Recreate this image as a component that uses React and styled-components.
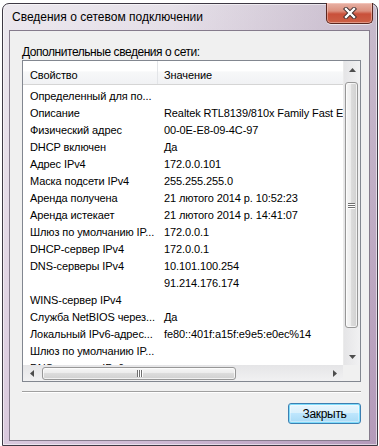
import React from 'react';
import styled, { createGlobalStyle } from 'styled-components';

const GlobalStyle = createGlobalStyle`
  html, body {
    margin: 0;
    padding: 0;
    background: #ffffff;
  }
  body {
    font-family: "Liberation Sans", Arial, sans-serif;
    color: #000;
  }
  #root {
    padding: 3px 0 0 2px;
  }
`;

const Window = styled.div`
  box-sizing: border-box;
  width: 376px;
  height: 443px;
  display: flex;
  flex-direction: column;
  padding: 0 7px 4px 6px;
  border: 1px solid #3e3944;
  border-radius: 7px 7px 0 0;
  background:
    linear-gradient(to right, rgba(255, 255, 255, 0.25), rgba(255, 255, 255, 0) 45%, rgba(90, 50, 100, 0.22)),
    linear-gradient(to bottom, #e6e1e9 0%, #ddd1e0 40%, #cdb7d2 100%);
  box-shadow: inset 0 0 0 1px rgba(255, 255, 255, 0.55);
`;

const TitleBar = styled.div`
  height: 26px;
  margin: 0 -7px 0 -6px;
  padding: 0 4px 0 9px;
  display: flex;
  justify-content: space-between;
  align-items: flex-start;
`;

const Title = styled.div`
  padding-top: 6px;
  font-size: 12px;
  line-height: 15px;
  color: #000;
`;

const CloseButton = styled.div`
  box-sizing: border-box;
  width: 47px;
  height: 21px;
  margin-top: -1px;
  display: flex;
  align-items: center;
  justify-content: center;
  border: 1px solid #5b2720;
  border-top: none;
  border-radius: 0 0 5px 5px;
  background: linear-gradient(to bottom, #e8b2a6 0%, #dc907e 40%, #c9503a 55%, #cc6046 100%);
  box-shadow: inset 0 0 0 1px rgba(255, 220, 210, 0.45), 0 1px 0 rgba(255, 255, 255, 0.6);
`;

const Client = styled.div`
  flex: 1;
  display: flex;
  flex-direction: column;
  padding: 14px 8px 0 12px;
  border: 1px solid #857b8c;
  background: #f0f0f0;
`;

const Caption = styled.div`
  font-size: 12px;
  line-height: 15px;
  letter-spacing: -0.45px;
`;

const ListBox = styled.div`
  height: 322px;
  box-sizing: border-box;
  border: 1px solid #828790;
  background: #ffffff;
  display: grid;
  grid-template-columns: minmax(0, 1fr) 17px;
  grid-template-rows: minmax(0, 1fr) 16px;
`;

const Viewport = styled.div`
  overflow: hidden;
  font-size: 11px;
  letter-spacing: -0.1px;
`;

const Header = styled.div`
  display: grid;
  grid-template-columns: 134px minmax(0, 1fr);
  height: 23px;
  border-bottom: 1px solid #d5d5d5;
  background: linear-gradient(to bottom, #ffffff 0%, #ffffff 45%, #f7f8f9 46%, #f1f2f4 100%);
`;

const HeaderCell = styled.div`
  padding: 7px 0 0 ${(p) => (p.$divided ? 6 : 7)}px;
  line-height: 15px;
  white-space: nowrap;
  border-left: ${(p) => (p.$divided ? '1px solid #e3e5e8' : 'none')};
`;

const Rows = styled.div`
  padding-top: 3px;
`;

const Row = styled.div`
  display: grid;
  grid-template-columns: 134px minmax(0, 1fr);
  height: 17px;
  line-height: 17px;
  white-space: nowrap;
`;

const Cell = styled.div`
  padding-left: 7px;
  overflow: ${(p) => (p.$clip ? 'hidden' : 'visible')};
`;

const VScroll = styled.div`
  grid-row: 1;
  grid-column: 2;
  display: flex;
  flex-direction: column;
  background: linear-gradient(to right, #e5e5e7, #f1f1f2);
  border-left: 1px solid #ebebeb;
`;

const HScroll = styled.div`
  grid-row: 2;
  grid-column: 1;
  display: flex;
  background: linear-gradient(to bottom, #e5e5e7, #f1f1f2);
`;

const Corner = styled.div`
  grid-row: 2;
  grid-column: 2;
  background: #f0f0f0;
`;

const ArrowBtn = styled.div`
  flex: none;
  width: ${(p) => (p.$horizontal ? '17px' : 'auto')};
  height: ${(p) => (p.$horizontal ? 'auto' : '17px')};
  display: flex;
  align-items: center;
  justify-content: center;
`;

const Track = styled.div`
  flex: 1;
  display: flex;
  flex-direction: ${(p) => (p.$horizontal ? 'row' : 'column')};
  padding: ${(p) => (p.$horizontal ? '2px 0 1px 2px' : '4px 2px 0 1px')};
`;

const Thumb = styled.div`
  box-sizing: border-box;
  flex: none;
  display: flex;
  align-items: center;
  justify-content: center;
  width: ${(p) => (p.$horizontal ? `${p.$length}px` : 'auto')};
  height: ${(p) => (p.$horizontal ? 'auto' : `${p.$length}px`)};
  border: 1px solid #979797;
  border-radius: 3px;
  background: linear-gradient(
    ${(p) => (p.$horizontal ? 'to bottom' : 'to right')},
    #f6f6f6 0%,
    #ececec 45%,
    #dcdcdc 50%,
    #d0d0d0 100%
  );
  box-shadow: inset 0 0 0 1px rgba(255, 255, 255, 0.7);
`;

const Separator = styled.div`
  margin-top: 9px;
  border-top: 1px solid #a0a0a0;
  border-bottom: 1px solid #ffffff;
`;

const Footer = styled.div`
  margin-top: 10px;
  display: flex;
  justify-content: flex-end;
`;

const Button = styled.button`
  box-sizing: border-box;
  width: 73px;
  height: 21px;
  padding: 0;
  font-family: "Liberation Sans", Arial, sans-serif;
  font-size: 12px;
  letter-spacing: -0.3px;
  color: #000;
  border: 1px solid #3c7fb1;
  border-radius: 3px;
  background: linear-gradient(to bottom, #eaf6fd 0%, #d9f0fc 48%, #bee6fd 50%, #a7d9f5 100%);
  box-shadow: inset 0 0 0 1px #7fdcfb, inset 0 0 0 2px rgba(255, 255, 255, 0.35);
`;

const Arrow = ({ dir }) => {
  const pts = {
    up: '0,4 3.5,0 7,4',
    down: '0,0 3.5,4 7,0',
    left: '4,0 0,3.5 4,7',
    right: '0,0 4,3.5 0,7',
  }[dir];
  const vertical = dir === 'up' || dir === 'down';
  return (
    <svg width={vertical ? 7 : 4} height={vertical ? 4 : 7} viewBox={vertical ? '0 0 7 4' : '0 0 4 7'}>
      <polygon points={pts} fill="#4d4d4d" />
    </svg>
  );
};

const Grip = ({ horizontal }) => (
  <svg width="7" height="7" viewBox="0 0 7 7">
    {[0, 2, 4].map((o) =>
      horizontal ? (
        <g key={o}>
          <rect x={o + 1} y="0" width="1" height="7" fill="#6f6f6f" />
          <rect x={o + 2} y="0" width="1" height="7" fill="#ffffff" />
        </g>
      ) : (
        <g key={o}>
          <rect x="0" y={o + 1} width="7" height="1" fill="#6f6f6f" />
          <rect x="0" y={o + 2} width="7" height="1" fill="#ffffff" />
        </g>
      )
    )}
  </svg>
);

const CloseGlyph = () => (
  <svg width="14" height="12" viewBox="0 0 14 12">
    <path d="M3 2 L11 10 M11 2 L3 10" stroke="#3a2a2a" strokeWidth="4.2" strokeLinecap="square" />
    <path d="M3 2 L11 10 M11 2 L3 10" stroke="#ffffff" strokeWidth="2.4" strokeLinecap="square" />
  </svg>
);

const rows = [
  ['Определенный для по...', ''],
  ['Описание', 'Realtek RTL8139/810x Family Fast Ethernet NIC'],
  ['Физический адрес', '00-0E-E8-09-4C-97'],
  ['DHCP включен', 'Да'],
  ['Адрес IPv4', '172.0.0.101'],
  ['Маска подсети IPv4', '255.255.255.0'],
  ['Аренда получена', '21 лютого 2014 р. 10:52:23'],
  ['Аренда истекает', '21 лютого 2014 р. 14:41:07'],
  ['Шлюз по умолчанию IP...', '172.0.0.1'],
  ['DHCP-сервер IPv4', '172.0.0.1'],
  ['DNS-серверы IPv4', '10.101.100.254'],
  ['', '91.214.176.174'],
  ['WINS-сервер IPv4', ''],
  ['Служба NetBIOS через...', 'Да'],
  ['Локальный IPv6-адрес...', 'fe80::401f:a15f:e9e5:e0ec%14'],
  ['Шлюз по умолчанию IP...', ''],
  ['DNS-серверы IPv6', ''],
];

export default function App() {
  return (
    <>
      <GlobalStyle />
      <Window>
        <TitleBar>
          <Title>Сведения о сетевом подключении</Title>
          <CloseButton>
            <CloseGlyph />
          </CloseButton>
        </TitleBar>
        <Client>
          <Caption>Дополнительные сведения о сети:</Caption>
          <ListBox>
            <Viewport>
              <Header>
                <HeaderCell>Свойство</HeaderCell>
                <HeaderCell $divided>Значение</HeaderCell>
              </Header>
              <Rows>
                {rows.map(([name, value], i) => (
                  <Row key={i}>
                    <Cell $clip>{name}</Cell>
                    <Cell>{value}</Cell>
                  </Row>
                ))}
              </Rows>
            </Viewport>
            <VScroll>
              <ArrowBtn>
                <Arrow dir="up" />
              </ArrowBtn>
              <Track>
                <Thumb $length={246}>
                  <Grip />
                </Thumb>
              </Track>
              <ArrowBtn>
                <Arrow dir="down" />
              </ArrowBtn>
            </VScroll>
            <HScroll>
              <ArrowBtn $horizontal>
                <Arrow dir="left" />
              </ArrowBtn>
              <Track $horizontal>
                <Thumb $horizontal $length={194}>
                  <Grip horizontal />
                </Thumb>
              </Track>
              <ArrowBtn $horizontal>
                <Arrow dir="right" />
              </ArrowBtn>
            </HScroll>
            <Corner />
          </ListBox>
          <Separator />
          <Footer>
            <Button>Закрыть</Button>
          </Footer>
        </Client>
      </Window>
    </>
  );
}
